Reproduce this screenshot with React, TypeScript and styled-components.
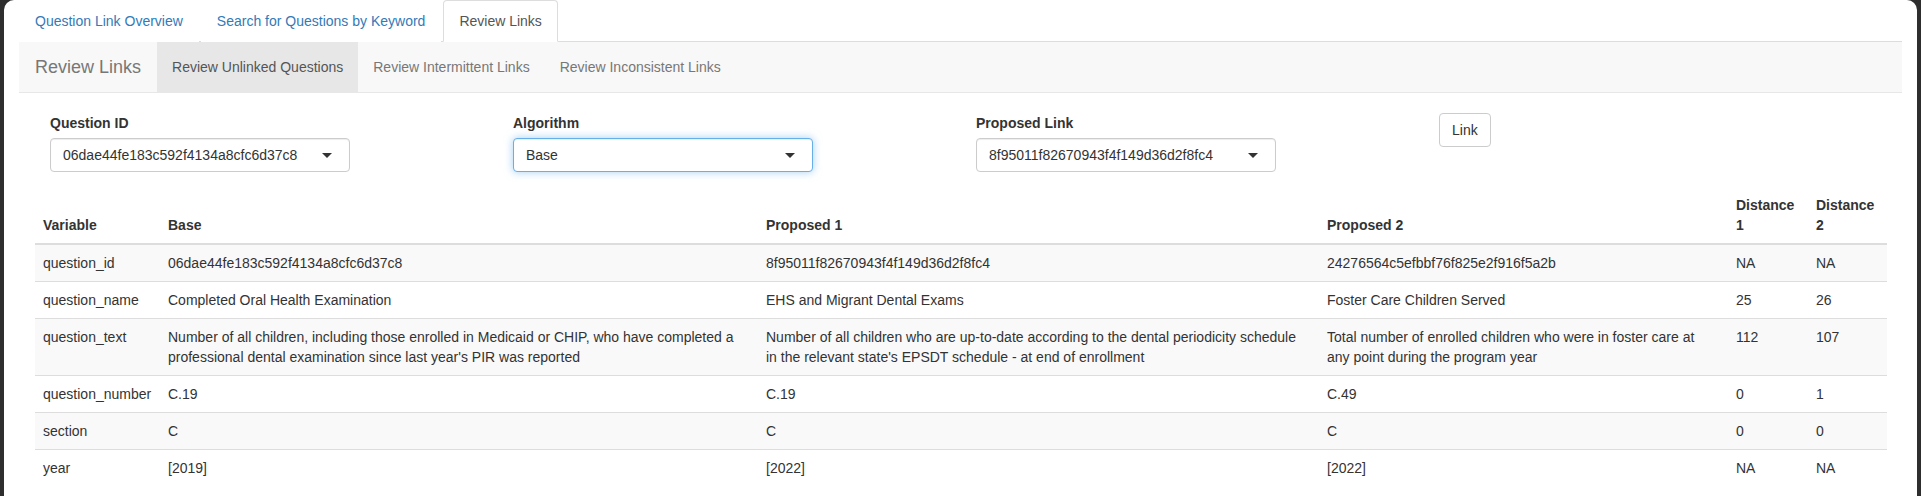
import React from 'react';
import styled, { createGlobalStyle } from 'styled-components';

const GlobalStyle = createGlobalStyle`
  html, body {
    margin: 0;
    padding: 0;
    background: #2e2e2e;
  }
  body {
    font-family: "Liberation Sans", Arial, Helvetica, sans-serif;
    font-size: 14px;
    line-height: 20px;
    color: #333;
  }
  * {
    box-sizing: border-box;
  }
`;

const Window = styled.div`
  margin: 0 4px 0 4px;
  min-height: 496px;
  background: #fff;
  border-radius: 10px 10px 0 0;
  padding: 0 15px;
`;

const Tabs = styled.ul`
  display: flex;
  list-style: none;
  margin: 0;
  padding: 0;
  height: 42px;
  border-bottom: 1px solid #ddd;
`;

const TabItem = styled.li`
  margin-bottom: -1px;
`;

const TabLink = styled.a<{ $active?: boolean }>`
  display: block;
  margin-right: 2px;
  padding: 10px 15px;
  line-height: 20px;
  border: 1px solid ${({ $active }) => ($active ? '#ddd' : 'transparent')};
  border-bottom-color: transparent;
  border-radius: 4px 4px 0 0;
  background: #fff;
  color: ${({ $active }) => ($active ? '#555' : '#337ab7')};
  text-decoration: none;
  cursor: pointer;
`;

const Navbar = styled.nav`
  display: flex;
  align-items: stretch;
  height: 51px;
  background: #f8f8f8;
  border-bottom: 1px solid #e7e7e7;
`;

const Brand = styled.span`
  padding: 15px 16px 15px 16px;
  font-size: 18px;
  line-height: 20px;
  color: #777;
`;

const NavLink = styled.a<{ $active?: boolean }>`
  display: block;
  padding: 15px;
  line-height: 20px;
  color: ${({ $active }) => ($active ? '#555' : '#777')};
  background: ${({ $active }) => ($active ? '#e7e7e7' : 'transparent')};
  text-decoration: none;
  cursor: pointer;
`;

const Content = styled.div`
  padding: 20px 15px 0 16px;
`;

const FormRow = styled.div`
  display: grid;
  grid-template-columns: repeat(4, 1fr);
`;

const FormColumn = styled.div`
  padding: 0 15px;
`;

const FormGroup = styled.div`
  margin-bottom: 15px;
`;

const Label = styled.label`
  display: block;
  margin-bottom: 5px;
  font-weight: bold;
  line-height: 20px;
`;

const SelectBox = styled.div<{ $focused?: boolean }>`
  position: relative;
  width: 300px;
  height: 34px;
  padding: 6px 12px;
  line-height: 20px;
  border: 1px solid ${({ $focused }) => ($focused ? '#66afe9' : '#ccc')};
  border-radius: 4px;
  background: #fff;
  box-shadow: ${({ $focused }) =>
    $focused
      ? 'inset 0 1px 1px rgba(0,0,0,.075), 0 0 8px rgba(102,175,233,.6)'
      : 'inset 0 1px 1px rgba(0,0,0,.075)'};
`;

const Caret = styled.span`
  position: absolute;
  right: 17px;
  top: 50%;
  margin-top: -2px;
  width: 0;
  height: 0;
  border-style: solid;
  border-width: 5px 5px 0 5px;
  border-color: #333 transparent transparent transparent;
`;

const Button = styled.button`
  height: 34px;
  padding: 6px 12px;
  font-family: inherit;
  font-size: 14px;
  line-height: 20px;
  color: #333;
  background: #fff;
  border: 1px solid #ccc;
  border-radius: 4px;
  cursor: pointer;
`;

const Table = styled.table`
  width: 100%;
  table-layout: fixed;
  border-collapse: collapse;
  border-spacing: 0;
`;

const Col = styled.col<{ $w: number }>`
  width: ${({ $w }) => $w}px;
`;

const Th = styled.th`
  padding: 8px;
  text-align: left;
  vertical-align: bottom;
  font-weight: bold;
  line-height: 20px;
  border-bottom: 2px solid #ddd;
`;

const Row = styled.tr<{ $striped: boolean }>`
  background: ${({ $striped }) => ($striped ? '#f9f9f9' : '#fff')};
`;

const Td = styled.td`
  padding: 8px 18px 8px 8px;
  vertical-align: top;
  line-height: 20px;
  border-top: 1px solid #ddd;
`;

const widths = [125, 598, 561, 409, 80, 79];

const headers = ['Variable', 'Base', 'Proposed 1', 'Proposed 2', 'Distance 1', 'Distance 2'];

const rows = [
  ['question_id', '06dae44fe183c592f4134a8cfc6d37c8', '8f95011f82670943f4f149d36d2f8fc4', '24276564c5efbbf76f825e2f916f5a2b', 'NA', 'NA'],
  ['question_name', 'Completed Oral Health Examination', 'EHS and Migrant Dental Exams', 'Foster Care Children Served', '25', '26'],
  [
    'question_text',
    "Number of all children, including those enrolled in Medicaid or CHIP, who have completed a professional dental examination since last year's PIR was reported",
    "Number of all children who are up-to-date according to the dental periodicity schedule in the relevant state's EPSDT schedule - at end of enrollment",
    'Total number of enrolled children who were in foster care at any point during the program year',
    '112',
    '107',
  ],
  ['question_number', 'C.19', 'C.19', 'C.49', '0', '1'],
  ['section', 'C', 'C', 'C', '0', '0'],
  ['year', '[2019]', '[2022]', '[2022]', 'NA', 'NA'],
];

const selects = [
  { label: 'Question ID', value: '06dae44fe183c592f4134a8cfc6d37c8' },
  { label: 'Algorithm', value: 'Base', focused: true },
  { label: 'Proposed Link', value: '8f95011f82670943f4f149d36d2f8fc4' },
];

const App: React.FC = () => {
  return (
    <>
      <GlobalStyle />
      <Window>
        <Tabs>
          <TabItem><TabLink>Question Link Overview</TabLink></TabItem>
          <TabItem><TabLink>Search for Questions by Keyword</TabLink></TabItem>
          <TabItem><TabLink $active>Review Links</TabLink></TabItem>
        </Tabs>

        <Navbar>
          <Brand>Review Links</Brand>
          <NavLink $active>Review Unlinked Questions</NavLink>
          <NavLink>Review Intermittent Links</NavLink>
          <NavLink>Review Inconsistent Links</NavLink>
        </Navbar>

        <Content>
          <FormRow>
            {selects.map((s) => (
              <FormColumn key={s.label}>
                <FormGroup>
                  <Label>{s.label}</Label>
                  <SelectBox $focused={s.focused}>
                    {s.value}
                    <Caret />
                  </SelectBox>
                </FormGroup>
              </FormColumn>
            ))}
            <FormColumn>
              <Button>Link</Button>
            </FormColumn>
          </FormRow>

          <Table>
            <colgroup>
              {widths.map((w, i) => (
                <Col key={i} $w={w} />
              ))}
            </colgroup>
            <thead>
              <tr>
                {headers.map((h) => (
                  <Th key={h}>{h}</Th>
                ))}
              </tr>
            </thead>
            <tbody>
              {rows.map((r, i) => (
                <Row key={r[0]} $striped={i % 2 === 0}>
                  {r.map((c, j) => (
                    <Td key={j}>{c}</Td>
                  ))}
                </Row>
              ))}
            </tbody>
          </Table>
        </Content>
      </Window>
    </>
  );
};

export default App;
